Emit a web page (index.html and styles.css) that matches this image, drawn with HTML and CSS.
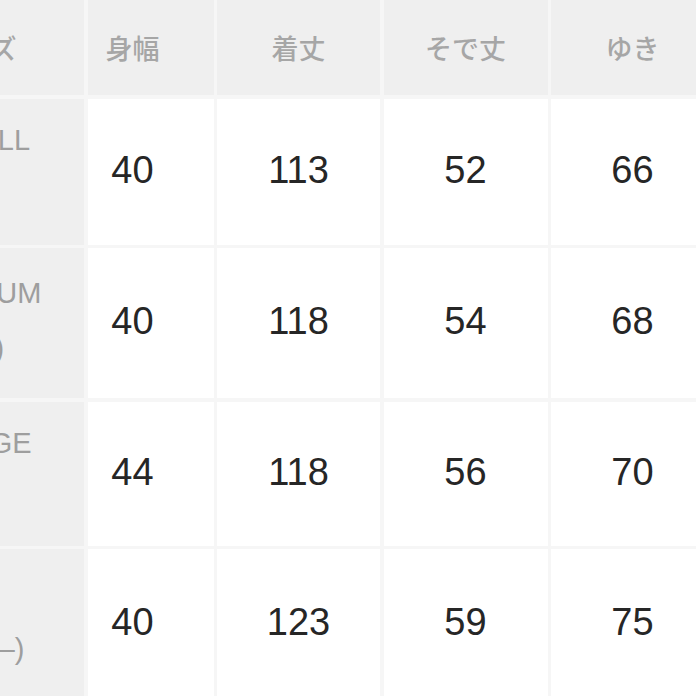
FILE: index.html
```html
<!DOCTYPE html>
<html lang="ja">
<head>
<meta charset="utf-8">
<title>サイズ表</title>
<link rel="stylesheet" href="styles.css">
</head>
<body>
<div class="size-table">
  <div class="cell head label-col">サイズ</div>
  <div class="cell head first">身幅</div>
  <div class="cell head">着丈</div>
  <div class="cell head">そで丈</div>
  <div class="cell head">ゆき</div>

  <div class="cell label">SMALL</div>
  <div class="cell num first">40</div>
  <div class="cell num">113</div>
  <div class="cell num">52</div>
  <div class="cell num">66</div>

  <div class="cell label two">MEDIUM<br>(M)</div>
  <div class="cell num first">40</div>
  <div class="cell num">118</div>
  <div class="cell num">54</div>
  <div class="cell num">68</div>

  <div class="cell label">LARGE</div>
  <div class="cell num first">44</div>
  <div class="cell num">118</div>
  <div class="cell num">56</div>
  <div class="cell num">70</div>

  <div class="cell label two">XL<br>(XL—)</div>
  <div class="cell num first">40</div>
  <div class="cell num">123</div>
  <div class="cell num">59</div>
  <div class="cell num">75</div>
</div>
</body>
</html>
```

FILE: styles.css
```css
html, body {
  margin: 0;
  padding: 0;
  background: #ffffff;
  overflow: hidden;
}

.size-table {
  display: grid;
  grid-template-columns: 203px 126px 163px 164px 163px;
  grid-template-rows: 95px 146px 150px 144px 150px;
  gap: 3.5px;
  background: #f6f6f6;
  margin-left: -119px;
  width: max-content;
}

.cell {
  display: flex;
  align-items: center;
  justify-content: center;
  text-align: center;
}

.head {
  background: #efefef;
  color: #a6a6a6;
  font-family: "Noto Sans CJK JP", "Noto Sans", sans-serif;
  font-size: 27px;
  font-weight: 500;
}

.label-col {
  padding-right: 12px;
}

.num {
  background: #ffffff;
  color: #262626;
  font-family: "Liberation Sans", Arial, sans-serif;
  font-size: 38px;
  padding-bottom: 3px;
}

.first {
  padding-right: 36px;
}

.label {
  background: #efefef;
  color: #9e9e9e;
  font-family: "Liberation Sans", "Noto Sans CJK JP", sans-serif;
  font-size: 29px;
  line-height: 55px;
  align-items: flex-start;
  padding-top: 14px;
  box-sizing: border-box;
}

.label.two {
  padding-top: 18px;
}
```
